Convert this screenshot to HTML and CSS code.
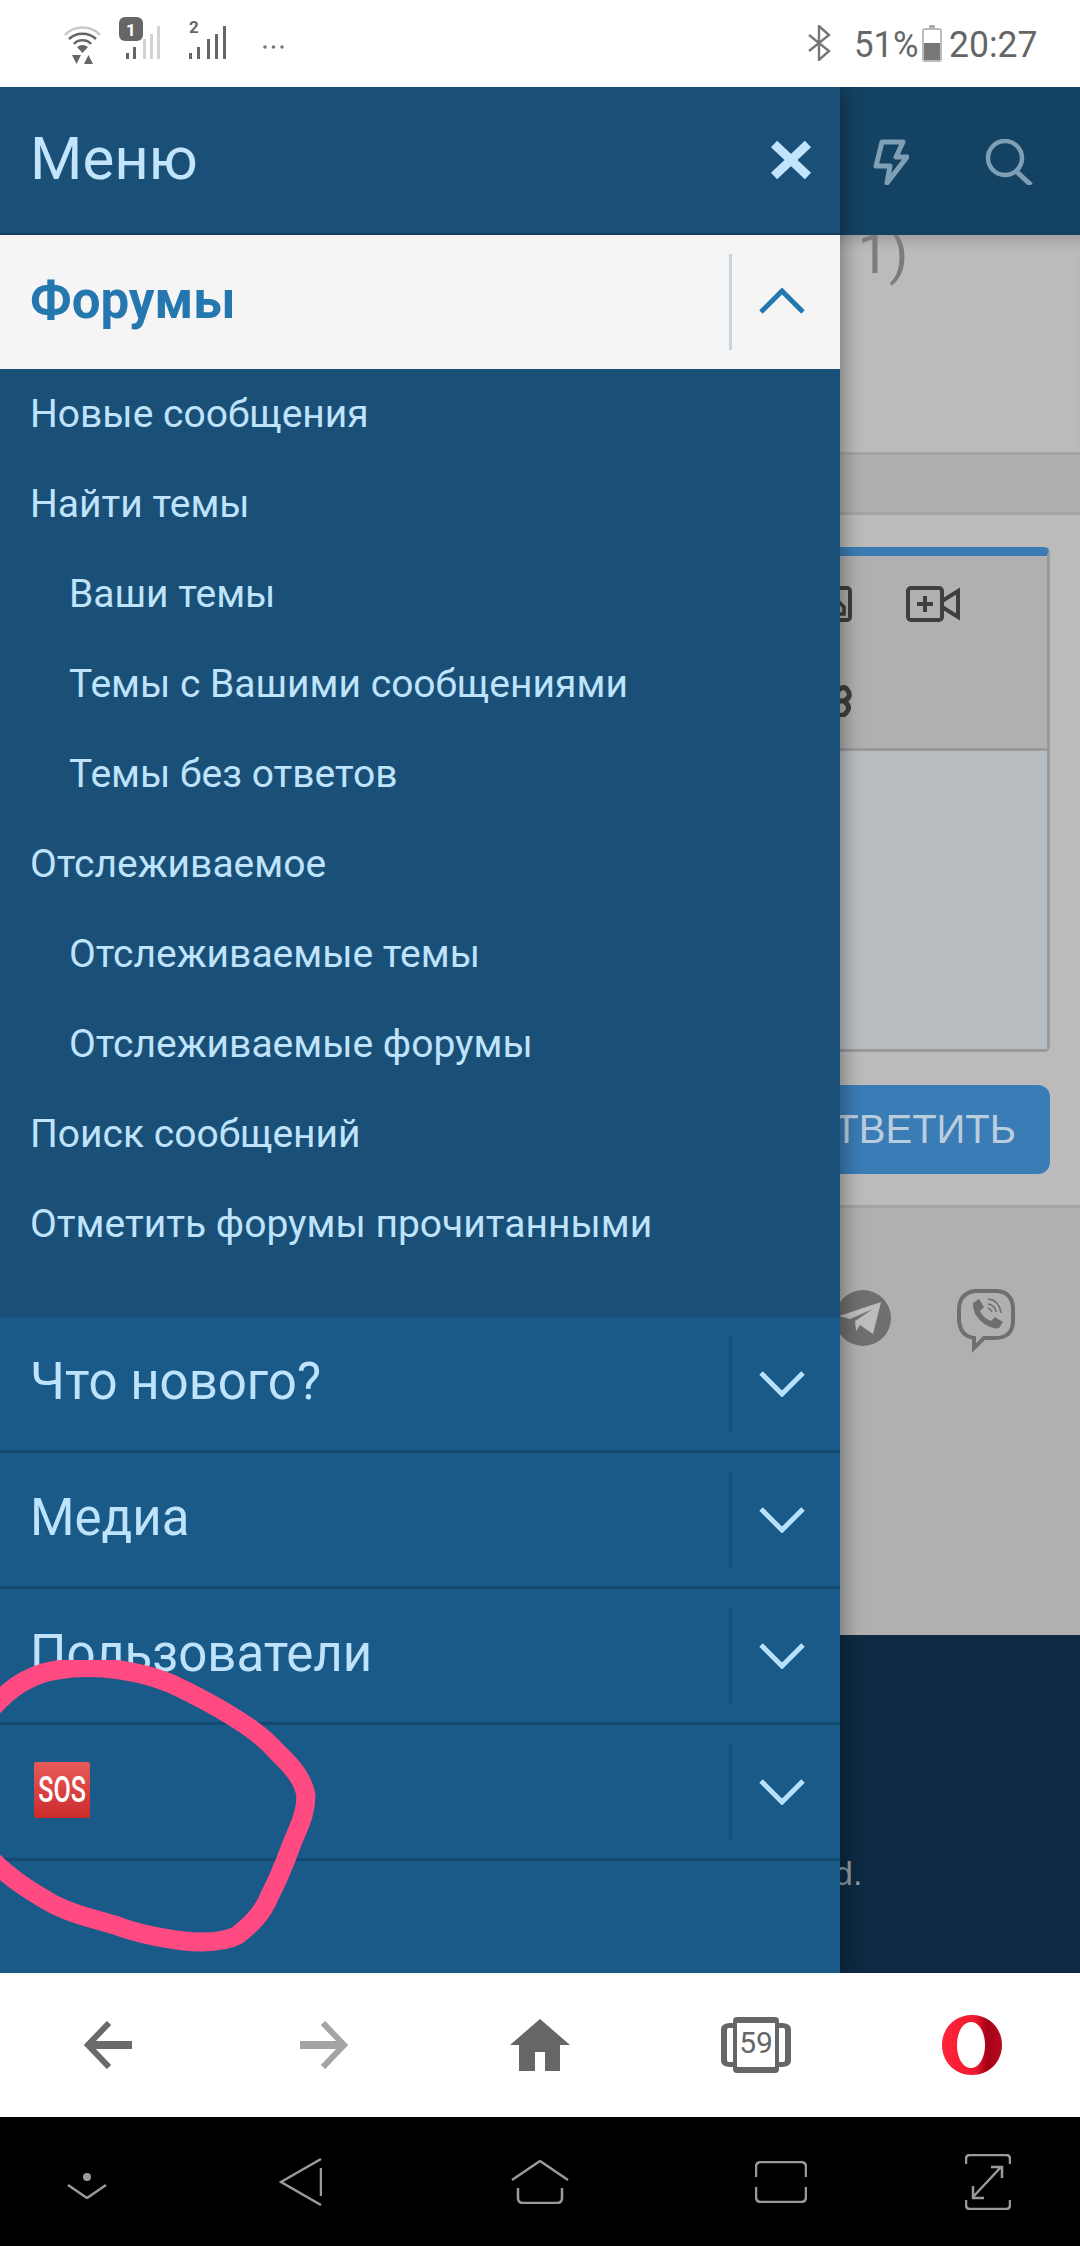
FILE: index.html
```html
<!DOCTYPE html>
<html lang="ru">
<head>
<meta charset="utf-8">
<title>Меню</title>
<link rel="stylesheet" href="styles.css">
</head>
<body>
<div class="screen">
  <div class="status">
    <div class="status-left">
      <svg class="i-wifi" width="39" height="40" viewBox="0 0 39 40" fill="none">
        <path d="M2 11C11 1 28 1 37 11" stroke="#c9c9c9" stroke-width="2.4"/>
        <path d="M6 15C13 8 26 8 33 15" stroke="#666" stroke-width="2.6"/>
        <path d="M11 20C15 15 24 15 28 20" stroke="#666" stroke-width="2.6"/>
        <path d="M14 23Q19.500 19 25 23L19.500 29Z" fill="#666"/>
        <path d="M9 31H18L13.500 40Z" fill="#666"/>
        <path d="M25.500 31L30 40H21Z" fill="#666"/>
      </svg>
      <svg class="i-sim1" width="44" height="42" viewBox="0 0 44 42">
        <rect width="24" height="24" rx="6" fill="#666"/>
        <text x="12" y="19" class="sim-no sim-no-light" text-anchor="middle">1</text>
        <rect x="7" y="36" width="3" height="6" fill="#666"/>
        <rect x="14" y="30" width="3" height="12" fill="#666"/>
        <rect x="24" y="22" width="3" height="20" fill="#d3d3d3"/>
        <rect x="31" y="17" width="3" height="25" fill="#d3d3d3"/>
        <rect x="38" y="9" width="3" height="33" fill="#d3d3d3"/>
      </svg>
      <svg class="i-sim2" width="38" height="42" viewBox="0 0 38 42">
        <text x="5" y="16" class="sim-no" text-anchor="middle">2</text>
        <rect x="0" y="36" width="3" height="6" fill="#666"/>
        <rect x="8" y="30" width="3" height="12" fill="#666"/>
        <rect x="18" y="22" width="3" height="20" fill="#666"/>
        <rect x="26" y="17" width="3" height="25" fill="#666"/>
        <rect x="34" y="9" width="3" height="33" fill="#666"/>
      </svg>
      <svg class="i-dots" width="21" height="4" viewBox="0 0 21 4" fill="#777">
        <circle cx="2" cy="2" r="1.800"/><circle cx="10.500" cy="2" r="1.800"/><circle cx="19" cy="2" r="1.800"/>
      </svg>
    </div>
    <div class="status-right">
      <svg class="i-bt" width="23" height="36" viewBox="0 0 23 36" fill="none" stroke="#777" stroke-width="2.400">
        <path d="M1 10L21 26L11 35V1L21 10L1 26"/>
      </svg>
      <span class="status-text pct">51%</span>
      <svg class="i-batt" width="20" height="37" viewBox="0 0 20 37">
        <rect x="7" y="0" width="6" height="3" rx="1" fill="#aaa"/>
        <rect x="1" y="4" width="18" height="32" rx="2" fill="#fff" stroke="#bbb" stroke-width="2"/>
        <rect x="2" y="18" width="16" height="17" fill="#777"/>
      </svg>
      <span class="status-text clock">20:27</span>
    </div>
  </div>

  <div class="viewport">
    <div class="page">
      <div class="page-header">
        <svg width="36" height="46" viewBox="0 0 36 46" fill="none" stroke="#7f9fb5" stroke-width="5" stroke-linejoin="round">
          <path d="M9 3H30L23 18H34L14 44L17 27H3Z"/>
        </svg>
        <svg width="48" height="46" viewBox="0 0 48 46" fill="none" stroke="#7f9fb5" stroke-width="4.500">
          <circle cx="20" cy="19" r="17"/><path d="M31 32L46 46" stroke-width="5"/>
        </svg>
      </div>
      <div class="page-title">
        <span class="title-text">: 1)</span>
      </div>
      <div class="page-band"></div>
      <div class="reply">
        <div class="editor">
          <div class="toolbar">
            <div class="tool-row">
              <svg width="50" height="36" viewBox="0 0 50 36" fill="none" stroke="#3f3f3f" stroke-width="4">
                <rect x="2" y="2" width="46" height="32" rx="3"/><path d="M26 28H42V21L38 17L34 21" stroke-width="3.500"/>
              </svg>
              <svg width="54" height="36" viewBox="0 0 54 36" fill="none" stroke="#3f3f3f" stroke-width="4">
                <rect x="2" y="2" width="34" height="32" rx="3"/>
                <path d="M11 18H27M19 10V26"/>
                <path d="M36 15L52 5V31L36 21"/>
              </svg>
            </div>
            <div class="tool-row tool-row-second">
              <svg width="50" height="32" viewBox="0 0 50 32" fill="none" stroke="#3f3f3f" stroke-width="5">
                <path d="M34 8Q42 -2 46 6Q50 12 42 16Q50 22 44 28Q38 34 34 26M36 16H42"/>
              </svg>
            </div>
          </div>
          <div class="textarea"></div>
        </div>
        <div class="reply-btn">ОТВЕТИТЬ</div>
      </div>
      <div class="share">
        <svg width="60" height="60" viewBox="0 0 60 60">
          <circle cx="30" cy="30" r="28" fill="#6f6f6f"/>
          <path d="M6 28L48 14L40 46L27 37L23 43L22 33L40 21L17 31Z" fill="#bdbdbd"/>
        </svg>
        <svg width="58" height="66" viewBox="0 0 58 66" fill="none">
          <path d="M18 3H40Q55 4 56 20V34Q55 50 38 50H27L17 60V50Q3 48 2 32V20Q3 5 18 3Z" stroke="#6f6f6f" stroke-width="4"/>
          <path d="M16 15L22 11L27 19L23 23Q26 30 34 33L38 29L46 34L42 40Q36 42 26 35Q15 26 16 15Z" fill="#6f6f6f"/>
          <path d="M31 11Q42 12 44 25M31 16Q38 17 39 24M31 20Q34 21 35 24" stroke="#6f6f6f" stroke-width="1.500"/>
        </svg>
      </div>
      <div class="page-footer">
        <span class="footer-text">d.</span>
      </div>
    </div>

    <nav class="drawer">
      <div class="drawer-head">
        <span class="drawer-title">Меню</span>
        <svg class="i-close" width="40" height="38" viewBox="0 0 40 38" fill="none" stroke="#c2e5fd" stroke-width="9">
          <path d="M3 3L37 35M37 3L3 35"/>
        </svg>
      </div>
      <div class="row row-open">
        <span class="row-label">Форумы</span>
        <span class="row-toggle">
          <svg width="46" height="26" viewBox="0 0 46 26" fill="none" stroke="#2577b0" stroke-width="5"><path d="M2 24L23 3L44 24"/></svg>
        </span>
      </div>
      <ul class="submenu">
        <li>Новые сообщения</li>
        <li>Найти темы</li>
        <li class="sub">Ваши темы</li>
        <li class="sub">Темы с Вашими сообщениями</li>
        <li class="sub">Темы без ответов</li>
        <li>Отслеживаемое</li>
        <li class="sub">Отслеживаемые темы</li>
        <li class="sub">Отслеживаемые форумы</li>
        <li>Поиск сообщений</li>
        <li>Отметить форумы прочитанными</li>
      </ul>
      <div class="row">
        <span class="row-label">Что нового?</span>
        <span class="row-toggle"><svg width="46" height="26" viewBox="0 0 46 26" fill="none" stroke="#b8e0fb" stroke-width="5"><path d="M2 2L23 23L44 2"/></svg></span>
      </div>
      <div class="row">
        <span class="row-label">Медиа</span>
        <span class="row-toggle"><svg width="46" height="26" viewBox="0 0 46 26" fill="none" stroke="#b8e0fb" stroke-width="5"><path d="M2 2L23 23L44 2"/></svg></span>
      </div>
      <div class="row">
        <span class="row-label">Пользователи</span>
        <span class="row-toggle"><svg width="46" height="26" viewBox="0 0 46 26" fill="none" stroke="#b8e0fb" stroke-width="5"><path d="M2 2L23 23L44 2"/></svg></span>
      </div>
      <div class="row">
        <span class="sos"><span class="sos-text">SOS</span></span>
        <span class="row-toggle"><svg width="46" height="26" viewBox="0 0 46 26" fill="none" stroke="#b8e0fb" stroke-width="5"><path d="M2 2L23 23L44 2"/></svg></span>
      </div>
    </nav>

    <svg class="scribble" width="330" height="300" viewBox="0 1660 330 300" fill="none">
      <path d="M-6 1706C10 1688 30 1674 57 1670C75 1667 90 1667 103 1668C130 1670 150 1675 172 1684C195 1695 212 1704 230 1715C250 1727 265 1738 277 1752C294 1768 303 1780 306 1795C306 1815 298 1828 291 1846C284 1865 278 1880 270 1895C262 1915 250 1925 238 1935C225 1942 205 1943 184 1941C160 1938 135 1933 115 1925C90 1918 65 1912 46 1900C25 1888 10 1878 -6 1862" stroke="#ff4a82" stroke-width="19" stroke-linecap="round" stroke-linejoin="round"/>
    </svg>
  </div>

  <div class="browser-bar">
    <svg width="48" height="48" viewBox="0 0 48 48" fill="none" stroke="#6a6a6a">
      <path d="M25 2L4 24L25 46" stroke-width="6"/><path d="M4 24H48" stroke-width="8"/>
    </svg>
    <svg width="48" height="48" viewBox="0 0 48 48" fill="none" stroke="#a4a4a4">
      <path d="M23 2L44 24L23 46" stroke-width="6"/><path d="M0 24H44" stroke-width="8"/>
    </svg>
    <svg width="60" height="52" viewBox="0 0 60 52" fill="#666">
      <path d="M30 0L60 26H50V52H35V33H25V52H9V26H0Z"/>
    </svg>
    <svg width="72" height="60" viewBox="0 0 72 60">
      <path d="M14 7H58V53H14Z" fill="#fff"/>
      <path d="M17 2Q13 2 13 6V8H9Q1 9 1 14V46Q1 51 9 52H13V54Q13 58 17 58H55Q59 58 59 54V52H63Q71 51 71 46V14Q71 9 63 8H59V6Q59 2 55 2ZM17 8H55V52H17ZM13 13V47H9Q7 47 7 45V15Q7 13 9 13ZM59 13H63Q65 13 65 15V45Q65 47 63 47H59Z" fill="#666"/>
      <text x="36" y="38" class="tab-count" text-anchor="middle">59</text>
    </svg>
    <svg width="60" height="60" viewBox="0 0 60 60">
      <defs>
        <linearGradient id="opera" x1="0" y1="0" x2="1" y2="0">
          <stop offset="0" stop-color="#ff2438"/><stop offset=".55" stop-color="#f01a30"/><stop offset=".75" stop-color="#a50015"/><stop offset="1" stop-color="#b80a20"/>
        </linearGradient>
      </defs>
      <path fill-rule="evenodd" d="M30 0C47 0 60 13 60 30C60 47 47 60 30 60C13 60 0 47 0 30C0 13 13 0 30 0ZM29 7C21 7 15 17 15 30C15 43 21 53 29 53C37 53 43 43 43 30C43 17 37 7 29 7Z" fill="url(#opera)"/>
    </svg>
  </div>

  <div class="system-bar">
    <svg class="n1" width="40" height="26" viewBox="0 0 40 26" fill="none" stroke="#9a9a9a" stroke-width="2.500">
      <ellipse cx="20" cy="4" rx="4" ry="4" fill="#9a9a9a" stroke="none"/><path d="M1 12L20 25L39 12"/>
    </svg>
    <svg class="n2" width="43" height="48" viewBox="0 0 43 48" fill="none" stroke="#9a9a9a" stroke-width="2.500">
      <path d="M42 1L2 24L42 47M42 10V38"/>
    </svg>
    <svg class="n3" width="58" height="44" viewBox="0 0 58 44" fill="none" stroke="#9a9a9a" stroke-width="2.500">
      <path d="M1 20L29 1L57 20M7 28V38Q7 43 12 43H46Q51 43 51 38V28"/>
    </svg>
    <svg class="n4" width="52" height="42" viewBox="0 0 52 42" fill="none" stroke="#9a9a9a" stroke-width="2.500">
      <path d="M1 16V6Q1 1 6 1H46Q51 1 51 6V16M1 26V36Q1 41 6 41H46Q51 41 51 36V26"/>
    </svg>
    <svg class="n5" width="46" height="56" viewBox="0 0 46 56" fill="none" stroke="#9a9a9a" stroke-width="2.500">
      <path d="M1 10V5Q1 1 5 1H41Q45 1 45 5V10M1 46V51Q1 55 5 55H41Q45 55 45 51V46M36 13L8 43M26 13H37V24M8 32V44H19"/>
    </svg>
  </div>
</div>
</body>
</html>
```

FILE: styles.css
```css
* { box-sizing: border-box; }
html, body { margin: 0; padding: 0; }
body { font-family: Roboto, "Liberation Sans", sans-serif; background: #000; }
svg { display: block; flex: none; }

.screen { width: 1080px; height: 2246px; display: flex; flex-direction: column; overflow: hidden; }

/* status bar */
.status { height: 87px; background: #fff; display: flex; justify-content: space-between; align-items: flex-start; flex: none; }
.status-left { display: flex; align-items: flex-start; padding: 17px 0 0 63px; }
.i-wifi { margin-top: 7px; }
.i-sim1 { margin-left: 17px; }
.i-sim2 { margin-left: 26px; }
.i-dots { margin-left: 36px; margin-top: 28px; }
.sim-no { font: 700 17px Roboto, sans-serif; fill: #666; }
.sim-no-light { fill: #fff; }
.status-right { display: flex; align-items: flex-start; padding: 25px 45px 0 0; }
.status-text { color: #666; font-size: 37px; line-height: 40px; display: block; transform-origin: left center; white-space: nowrap; }
.pct { width: 61px; margin-left: 23px; transform: scaleX(.94); }
.i-batt { margin-left: 7px; }
.clock { width: 86px; margin-left: 7px; transform: scaleX(.96); }

/* stage */
.viewport { position: relative; flex: none; height: 1886px; overflow: hidden; }
.page { height: 100%; background: #bbb; display: flex; flex-direction: column; }
.page-header { height: 148px; flex: none; background: #144263; display: flex; justify-content: flex-end; align-items: center; gap: 76px; padding: 2px 47px 0 0; }
.page-title { height: 217px; flex: none; overflow: hidden; padding-left: 830px; box-shadow: inset 0 14px 14px -10px rgba(0,0,0,.2); }
.title-text { display: block; font-size: 56px; line-height: 56px; margin-top: -9px; color: #7c7c7c; }
.page-band { height: 63px; flex: none; background: #afafaf; border-top: 3px solid #a5a5a5; border-bottom: 3px solid #a5a5a5; }
.reply { height: 690px; flex: none; padding: 32px 30px 0; }
.editor { height: 505px; background: #b0b0b0; border-top: 9px solid #3b7cb4; border-right: 3px solid #9a9a9a; border-bottom: 3px solid #9a9a9a; border-radius: 6px; display: flex; flex-direction: column; }
.toolbar { height: 195px; flex: none; border-bottom: 3px solid #9a9a9a; padding: 30px 0 0 772px; }
.tool-row { display: flex; gap: 54px; }
.tool-row-second { margin-top: 63px; }
.textarea { flex: 1; background: #b8bdc1; }
.reply-btn { height: 89px; margin-top: 33px; background: #3a7cb5; border-radius: 12px; color: #b9cddd; font: 40px/89px "Liberation Sans", sans-serif; text-align: right; padding-right: 34px; }
.share { height: 430px; flex: none; background: #b0b0b0; border-top: 3px solid #a3a3a3; display: flex; align-items: flex-start; gap: 64px; padding: 80px 0 0 833px; }
.page-footer { flex: 1; background: #0d2a42; padding: 216px 0 0 834px; }
.footer-text { color: #8e9aa4; font: 34px/44px "Liberation Sans", sans-serif; }

/* drawer */
.drawer { position: absolute; left: 0; top: 0; bottom: 0; width: 840px; background: #195a88; box-shadow: 4px 0 18px rgba(0,0,0,.35); }
.drawer-head { height: 148px; background: #1a5078; border-bottom: 2px solid #143f60; display: flex; align-items: center; justify-content: space-between; padding: 0 29px 2px 30px; }
.drawer-title { color: #c2e5fd; font-size: 60px; line-height: 64px; }
.i-close { margin-top: 2px; }
.row { height: 136px; display: flex; align-items: center; justify-content: space-between; border-bottom: 3px solid #144a72; padding: 0 0 0 30px; }
.row-label { color: #bfe3fb; font-size: 51px; line-height: 60px; margin-top: -3px; }
.row-toggle { width: 111px; height: 96px; border-left: 3px solid #164f78; display: flex; align-items: center; justify-content: center; padding-right: 8px; }
.row-open { height: 134px; background: #f5f5f5; border-bottom: 0; }
.row-open .row-label { color: #2577b0; font-weight: 700; margin-top: -3px; }
.row-open .row-toggle { border-left-color: #c3d5e2; padding-bottom: 2px; }
.submenu { list-style: none; margin: 0; padding: 0 0 48px; background: #1a5078; }
.submenu li { height: 90px; line-height: 90px; color: #bfe3fb; font-size: 39px; padding-left: 30px; }
.submenu .sub { padding-left: 69px; }
.sos { width: 56px; height: 56px; margin-left: 4px; margin-top: -3px; border-radius: 2px; background: linear-gradient(#e85a5a, #cc2b2b); display: flex; align-items: center; justify-content: center; }
.sos-text { color: #fff; font-size: 37px; line-height: 40px; font-weight: 500; transform: scaleX(.68); display: block; }
.scribble { position: absolute; left: 0; top: 1573px; }

/* browser bar */
.browser-bar { height: 144px; flex: none; background: #fff; display: grid; grid-template-columns: repeat(5, 1fr); justify-items: center; align-items: center; }
.tab-count { font: 30px Roboto, sans-serif; fill: #666; }

/* system bar */
.system-bar { height: 129px; flex: none; background: #000; display: flex; align-items: flex-start; }
.n1 { margin: 56px 0 0 67px; }
.n2 { margin: 41px 0 0 172px; }
.n3 { margin: 43px 0 0 189px; }
.n4 { margin: 44px 0 0 186px; }
.n5 { margin: 37px 0 0 158px; }
```
